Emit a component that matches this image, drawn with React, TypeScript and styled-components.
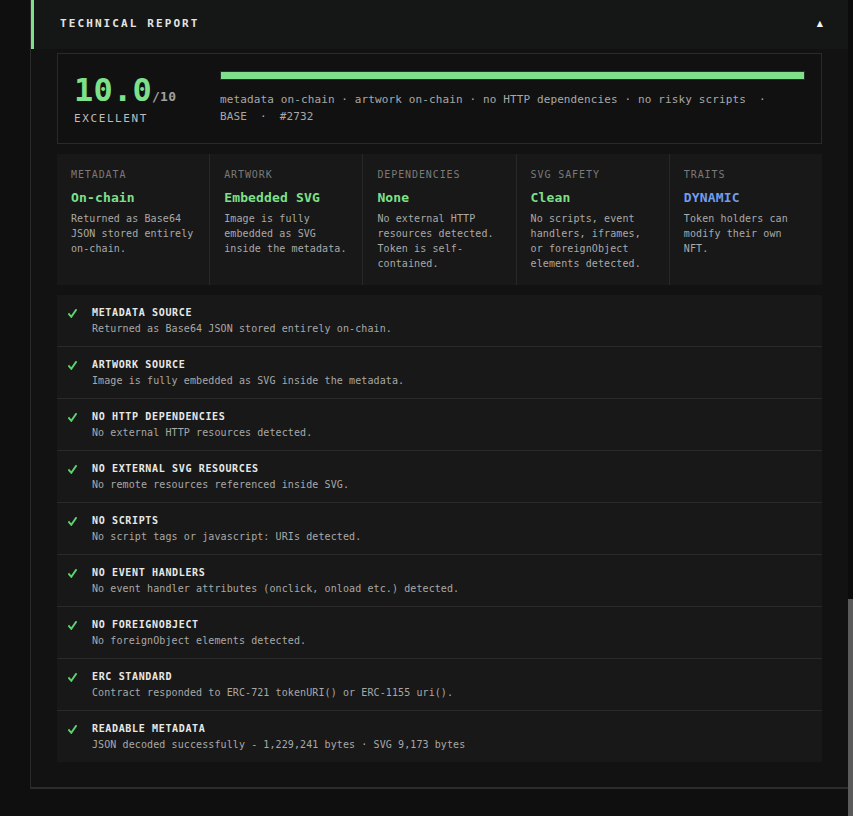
import React from "react";
import styled, { createGlobalStyle } from "styled-components";

const GREEN = "#7ee08a";
const BLUE = "#6f9df0";
const MONO = `"DejaVu Sans Mono", "Liberation Mono", monospace`;

const metrics = [
  { label: "Metadata", value: "On-chain", desc: "Returned as Base64 JSON stored entirely on-chain." },
  { label: "Artwork", value: "Embedded SVG", desc: "Image is fully embedded as SVG inside the metadata." },
  { label: "Dependencies", value: "None", desc: "No external HTTP resources detected. Token is self-contained." },
  { label: "SVG Safety", value: "Clean", desc: "No scripts, event handlers, iframes, or foreignObject elements detected." },
  { label: "Traits", value: "DYNAMIC", desc: "Token holders can modify their own NFT.", tone: "blue" },
];

const checks = [
  { title: "Metadata source", desc: "Returned as Base64 JSON stored entirely on-chain." },
  { title: "Artwork source", desc: "Image is fully embedded as SVG inside the metadata." },
  { title: "No HTTP dependencies", desc: "No external HTTP resources detected." },
  { title: "No external SVG resources", desc: "No remote resources referenced inside SVG." },
  { title: "No scripts", desc: "No script tags or javascript: URIs detected." },
  { title: "No event handlers", desc: "No event handler attributes (onclick, onload etc.) detected." },
  { title: "No foreignObject", desc: "No foreignObject elements detected." },
  { title: "ERC standard", desc: "Contract responded to ERC-721 tokenURI() or ERC-1155 uri()." },
  { title: "Readable metadata", desc: "JSON decoded successfully - 1,229,241 bytes · SVG 9,173 bytes" },
];

function CheckIcon() {
  return (
    <svg width="9" height="9" viewBox="0 0 9 9" aria-hidden="true">
      <path d="M1 5.2 L3.3 7.8 L8 1" fill="none" stroke="#5fd16e" strokeWidth="1.9" strokeLinecap="square" />
    </svg>
  );
}

export default function App() {
  return (
    <>
      <GlobalStyle />
      <Page>
        <Panel>
          <Header>
            <HeaderTitle>Technical Report</HeaderTitle>
            <Caret>▲</Caret>
          </Header>
          <Body>
            <ScoreCard>
              <ScoreBlock>
                <Score>
                  10.0<ScoreMax>/10</ScoreMax>
                </Score>
                <Grade>Excellent</Grade>
              </ScoreBlock>
              <ScoreInfo>
                <Track>
                  <Fill style={{ width: `${(10 / 10) * 100}%` }} />
                </Track>
                <Meta>
                  <MetaGroup>
                    <span>metadata on-chain · artwork on-chain · no HTTP dependencies · no risky scripts</span>
                    <span>·</span>
                  </MetaGroup>
                  <MetaGroup>
                    <span>BASE</span>
                    <span>·</span>
                    <span>#2732</span>
                  </MetaGroup>
                </Meta>
              </ScoreInfo>
            </ScoreCard>

            <MetricGrid>
              {metrics.map((m) => (
                <MetricCard key={m.label}>
                  <MetricLabel>{m.label}</MetricLabel>
                  <MetricValue $tone={m.tone}>{m.value}</MetricValue>
                  <MetricDesc>{m.desc}</MetricDesc>
                </MetricCard>
              ))}
            </MetricGrid>

            <CheckList>
              {checks.map((c) => (
                <CheckRow key={c.title}>
                  <Tick>
                    <CheckIcon />
                  </Tick>
                  <div>
                    <CheckTitle>{c.title}</CheckTitle>
                    <CheckDesc>{c.desc}</CheckDesc>
                  </div>
                </CheckRow>
              ))}
            </CheckList>
          </Body>
        </Panel>
      </Page>
      <ScrollTrack>
        <ScrollThumb />
      </ScrollTrack>
    </>
  );
}

const GlobalStyle = createGlobalStyle`
  html, body {
    margin: 0;
    background: #0f0f0f;
    font-family: ${MONO};
    overflow: hidden;
  }
  * { box-sizing: border-box; }
`;

const Page = styled.div`
  min-height: 100vh;
  padding: 0 5px 0 30px;
  background: #0f0f0f;
`;

const Panel = styled.section`
  border-left: 1px solid #2a2a2a;
  border-bottom: 2px solid #2c2c2c;
  background: #121212;
`;

const Header = styled.div`
  height: 49px;
  display: flex;
  align-items: center;
  justify-content: space-between;
  padding: 0 25px 2px 26px;
  border-left: 3px solid ${GREEN};
  background: #141715;
`;

const HeaderTitle = styled.h2`
  margin: 0;
  font-size: 11px;
  font-weight: 700;
  letter-spacing: 2.1px;
  text-transform: uppercase;
  color: #e4e4e2;
`;

const Caret = styled.span`
  font-family: "DejaVu Sans", sans-serif;
  font-size: 8px;
  color: #f2f2f2;
`;

const Body = styled.div`
  display: flex;
  flex-direction: column;
  gap: 10px;
  padding: 4px 26px 25px;
`;

const ScoreCard = styled.div`
  height: 91px;
  display: flex;
  align-items: center;
  gap: 24px;
  padding: 0 16px;
  border: 1px solid #2a2a2a;
  background: #111111;
`;

const ScoreBlock = styled.div`
  width: 122px;
  flex-shrink: 0;
`;

const Score = styled.div`
  font-size: 32px;
  font-weight: 700;
  line-height: 36px;
  letter-spacing: 0.2px;
  color: ${GREEN};
`;

const ScoreMax = styled.span`
  font-size: 13px;
  letter-spacing: 0.3px;
  color: #a0a0a0;
`;

const Grade = styled.div`
  margin-top: -3px;
  font-size: 11px;
  letter-spacing: 1.6px;
  text-transform: uppercase;
  color: #bdbdbd;
`;

const ScoreInfo = styled.div`
  flex: 1;
  display: flex;
  flex-direction: column;
  gap: 11px;
  padding-bottom: 2px;
`;

const Track = styled.div`
  height: 9px;
  border: 1px solid #24302a;
  background: #1c1c1c;
`;

const Fill = styled.div`
  height: 100%;
  background: ${GREEN};
`;

const Meta = styled.div`
  display: flex;
  flex-wrap: wrap;
  column-gap: 13px;
  font-size: 11px;
  letter-spacing: 0.12px;
  line-height: 17px;
  color: #a8a8a8;
`;

const MetaGroup = styled.div`
  display: flex;
  gap: 13px;
`;

const MetricGrid = styled.div`
  display: grid;
  grid-template-columns: repeat(5, 1fr);
  gap: 1px;
  background: #272727;
`;

const MetricCard = styled.div`
  height: 131px;
  padding: 14px 14px 13px;
  background: #181818;
`;

const MetricLabel = styled.div`
  font-size: 10px;
  line-height: 14px;
  letter-spacing: 0.9px;
  text-transform: uppercase;
  color: #7a7a7a;
`;

const MetricValue = styled.div<{ $tone?: string }>`
  margin-top: 7px;
  font-size: 13px;
  font-weight: 700;
  line-height: 18px;
  letter-spacing: 0.15px;
  color: ${(p) => (p.$tone === "blue" ? BLUE : GREEN)};
`;

const MetricDesc = styled.p`
  margin: 4px 0 0;
  font-size: 10px;
  line-height: 15px;
  letter-spacing: 0.1px;
  color: #a9a9a9;
`;

const CheckList = styled.div`
  display: flex;
  flex-direction: column;
  background: #181818;
`;

const CheckRow = styled.div`
  display: grid;
  grid-template-columns: 24px 1fr;
  padding: 11px 14px 10px 11px;
  & + & {
    border-top: 1px solid #2a2a2a;
  }
`;

const Tick = styled.span`
  display: flex;
  align-items: center;
  height: 14px;
`;

const CheckTitle = styled.div`
  font-size: 10px;
  font-weight: 700;
  line-height: 14px;
  letter-spacing: 0.65px;
  text-transform: uppercase;
  color: #e8e8e6;
`;

const CheckDesc = styled.div`
  margin-top: 2px;
  font-size: 10px;
  line-height: 14px;
  letter-spacing: 0.1px;
  color: #a8a8a8;
`;

const ScrollTrack = styled.div`
  position: fixed;
  top: 0;
  right: 0;
  width: 5px;
  height: 100vh;
  background: #0c0c0c;
`;

const ScrollThumb = styled.div`
  margin-top: 599px;
  height: 217px;
  background: #5a5a5a;
`;
